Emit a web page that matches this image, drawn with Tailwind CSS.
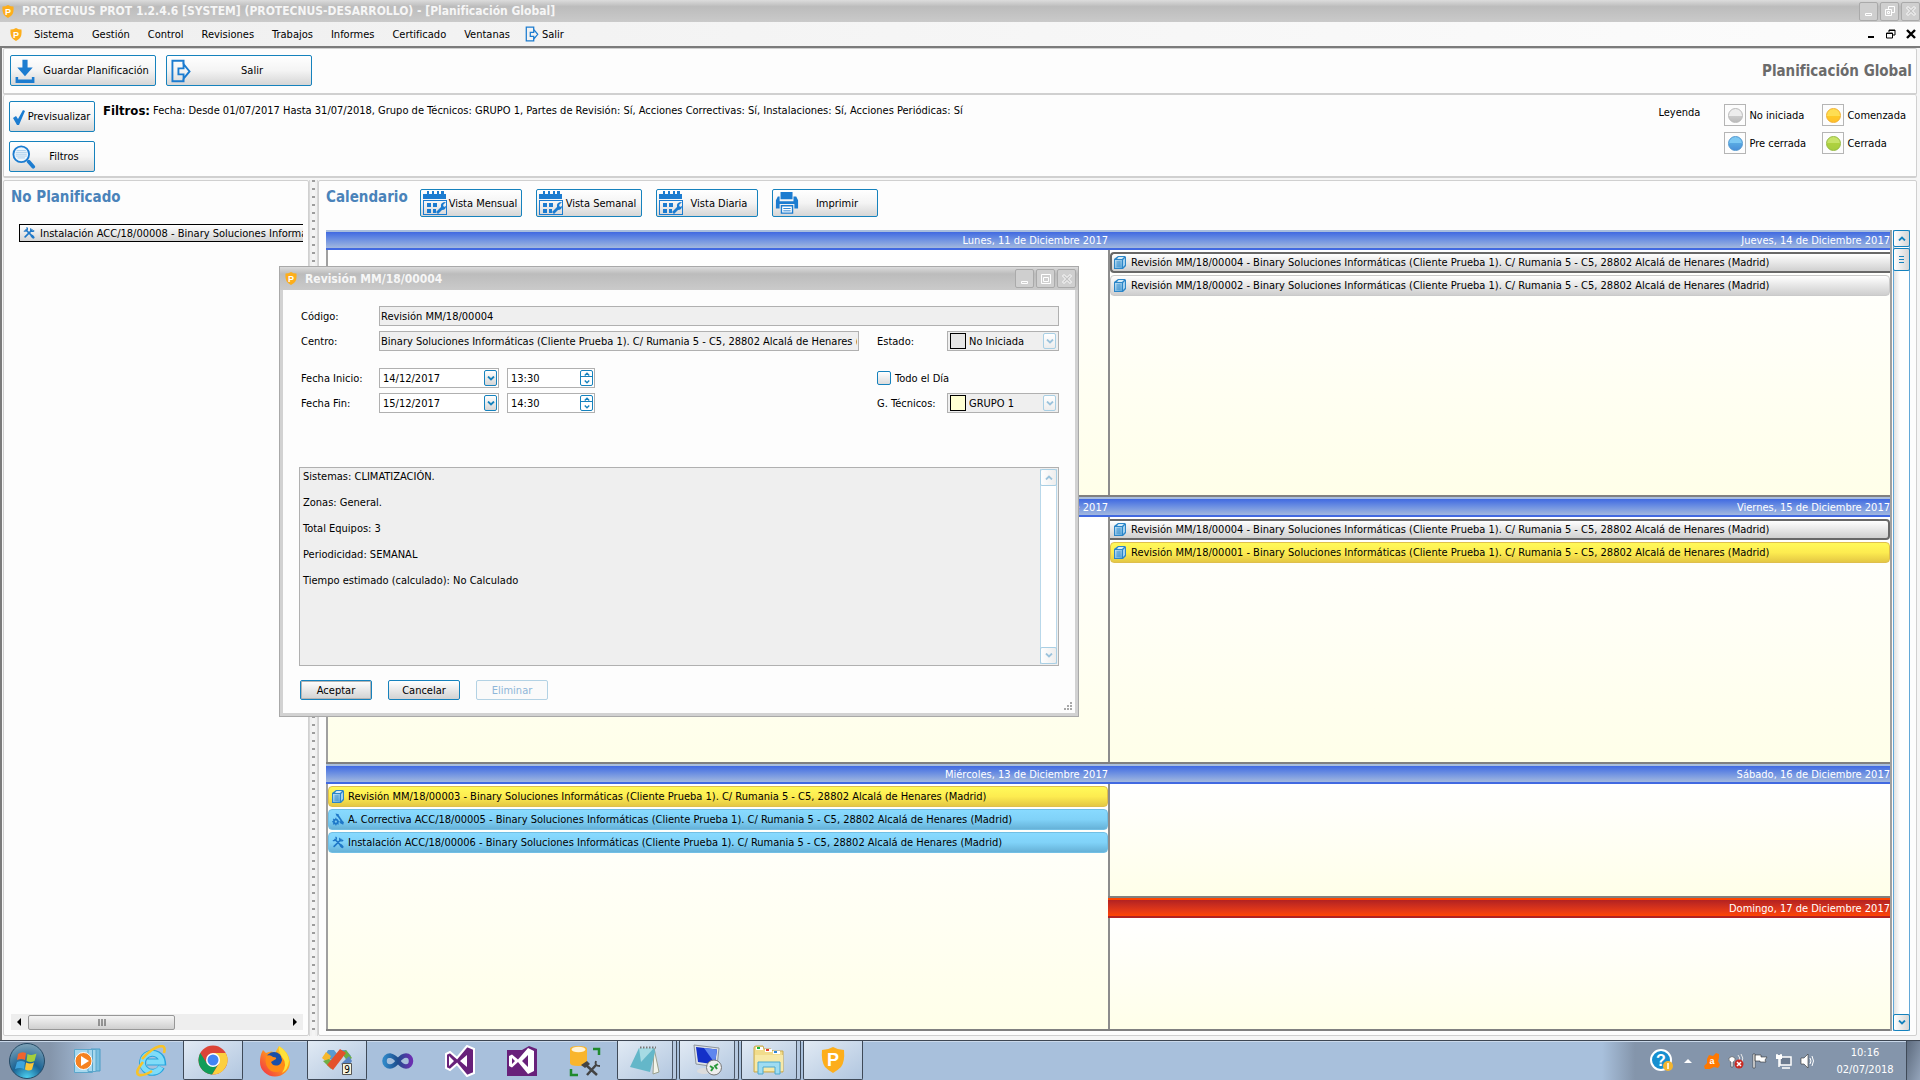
<!DOCTYPE html>
<html lang="es">
<head>
  <meta charset="UTF-8" />
  <meta name="viewport" content="width=device-width, initial-scale=1.0" />
  <title>PROTECNUS PROT - Planificación Global</title>
  <script src="https://cdn.jsdelivr.net/npm/@tailwindcss/browser@4"></script>
</head>
<body class="min-h-screen flex flex-col bg-[#fdfdfd] text-black text-[11px] leading-[13px] font-['DejaVu_Sans_Condensed','DejaVu_Sans',sans-serif]">

  <!-- Icon set -->
  <svg class="absolute size-0" aria-hidden="true">
    <defs>
      <linearGradient id="docGrad" x1="0" y1="0" x2="1" y2="1"><stop offset="0" stop-color="#b9dcf2" /><stop offset="1" stop-color="#5ba6da" /></linearGradient>
      <linearGradient id="blueGrad" x1="0" y1="0" x2="0" y2="1"><stop offset="0" stop-color="#8fe3fb" /><stop offset="1" stop-color="#1f9ad6" /></linearGradient>
    </defs>
    <symbol id="logo" viewBox="0 0 24 26">
      <path fill="#fdae1b" d="M1 3q6 0 11-3q5 3 11 3q1 12-3 17q-3 3-8 6q-5-3-8-6q-4-6-3-17z" />
      <text x="12" y="19" text-anchor="middle" font-family="Liberation Sans" font-weight="700" font-size="18" fill="#fff">P</text>
    </symbol>
    <symbol id="exit" viewBox="0 0 24 28">
      <path fill="none" stroke="#1c7cd0" stroke-width="2.2" d="M15 6V2H2v24h13v-3" />
      <path fill="none" stroke="#1c7cd0" stroke-width="2.2" d="M9 11h6V6l7 8.500-7 8.500v-5H9z" />
    </symbol>
    <symbol id="download" viewBox="0 0 24 28">
      <path fill="#1c7cd0" d="M9 1h6v9h6l-9 10-9-10h6zM1 21h3v3h16v-3h3v7H1z" />
    </symbol>
    <symbol id="check" viewBox="0 0 14 16"><path fill="#1c7cd0" d="M1 9l3-2 2 3 5-9 2 1-6 14H5z" /></symbol>
    <symbol id="lens" viewBox="0 0 26 26">
      <circle cx="10" cy="10" r="8.500" fill="#eef6fc" stroke="#1c7cd0" stroke-width="2" />
      <path stroke="#a9cdec" stroke-width="1" d="M5 6h10M4 8h12M4 10h12M4 12h12M6 14h8" />
      <path stroke="#1c7cd0" stroke-width="4" stroke-linecap="round" d="M18 18l5 5.500" />
    </symbol>
    <symbol id="calendar" viewBox="0 0 24 24">
      <path fill="#1c7cd0" d="M4 0h2v3h3V0h2v3h3V0h2v3h2V0h3v3h2v5H0V3h4z" />
      <path fill="#1c7cd0" d="M0 9h24v15H0zm1 1v13h22V10z" />
      <path fill="#1c7cd0" d="M4 12h4v4H4zM10 12h4v4h-4zM4 18h4v4H4zM10 18h3v4h-3zM13 21l5-5q-1-5 5-5l-3 3 1 2 2-1q0 4-4 4l-4 4z" />
    </symbol>
    <symbol id="printer" viewBox="0 0 26 24">
      <path fill="#1c7cd0" d="M6 0h13v8H6zM3 5h2v5h15V5h3l2 4v9h-4v-5H5v5H1V9z" />
      <path fill="#fff" stroke="#1c7cd0" stroke-width="1.500" d="M7 15h12v8H7z" />
      <path stroke="#1c7cd0" d="M9 18h8M9 20.500h8" />
    </symbol>
    <symbol id="doc" viewBox="0 0 12 13">
      <path fill="#2c86c8" d="M4 0h7l1 1v9l-3 3H0V3z" />
      <path fill="#d5ebf8" d="M4.500 1H10L8 3H3z" />
      <path fill="url(#docGrad)" d="M1 4h7v8H1z" />
      <path stroke="#2c86c8" stroke-width=".8" d="M2.500 6h4M2.500 8h4M2.500 10h4" />
      <path fill="#a5d2ef" d="M9 4l2-2v7l-2 2z" />
    </symbol>
    <symbol id="tools" viewBox="0 0 14 14">
      <path stroke="#1f78c8" stroke-width="2" stroke-linecap="round" d="M3.500 3.500l7.500 7.500M2.500 11.500l8-8" />
      <path fill="none" stroke="#1f78c8" stroke-width="1.600" d="M1 4.500q2 1 3.500-1T4 .8M9 1.500q-.5 3 1 3.500t3-1" />
      <path stroke="#1f78c8" stroke-width="3" stroke-linecap="round" d="M10.500 10.500l1.500 1.500" />
    </symbol>
    <symbol id="repair" viewBox="0 0 14 14">
      <circle cx="4.500" cy="9.500" r="2.300" fill="none" stroke="#1f78c8" stroke-width="2" />
      <path stroke="#1f78c8" stroke-width="1.200" d="M4.500 5v2M4.500 12v2M0 9.500h2M7 9.500h2M1.300 6.300l1.500 1.500M6.300 11.300l1.400 1.400M2.700 11.300l-1.400 1.400" />
      <path stroke="#1f78c8" stroke-width="2" d="M6 1l6 9" />
      <path fill="#1f78c8" d="M4 0l4 1-2 3zM10 8l4 2-1 3-4-2z" />
    </symbol>
    <symbol id="up" viewBox="0 0 8 5"><path fill="none" stroke="currentColor" stroke-width="1.800" d="M1 4.500l3-3 3 3" /></symbol>
    <symbol id="down" viewBox="0 0 8 5"><path fill="none" stroke="currentColor" stroke-width="1.800" d="M1 .5l3 3 3-3" /></symbol>
    <symbol id="win-min" viewBox="0 0 10 10"><path fill="none" stroke="currentColor" d="M1.500 7.500h6v2h-6z" /></symbol>
    <symbol id="win-max" viewBox="0 0 10 10"><path fill="none" stroke="currentColor" d="M.5.5h9v9h-9zM2.500 3.500h5v4h-5z" /></symbol>
    <symbol id="win-restore" viewBox="0 0 10 10"><path fill="none" stroke="currentColor" d="M3.500 3V.5h6v6H7M.5 3.500h6v6h-6zM2.500 5.500h2v2h-2z" /></symbol>
    <symbol id="win-close" viewBox="0 0 10 10"><path fill="#c4c4c4" stroke="currentColor" d="M.5 2L2 .5l3 3 3-3L9.500 2l-3 3 3 3L8 9.500l-3-3-3 3L.5 8l3-3z" /></symbol>
  </svg>

  <!-- Title bar -->
  <header class="h-[22px] shrink-0 flex items-center pl-0.5 bg-linear-to-b from-[#dcdcdc] via-[#bcbcbc] via-30% to-[#cacaca]">
    <svg class="w-3 h-[13px]"><use href="#logo" /></svg>
    <h1 class="flex-1 pl-2 text-xs leading-4 font-bold text-[#f6f6f6]">PROTECNUS PROT 1.2.4.6 [SYSTEM] (PROTECNUS-DESARROLLO) - [Planificación Global]</h1>
    <div class="flex gap-0.5 text-white">
      <button aria-label="Minimizar" class="size-[19px] grid place-items-center border border-[#aaa] rounded-xs bg-[#cfcfcf]"><svg class="size-2.5"><use href="#win-min" /></svg></button>
      <button aria-label="Restaurar" class="size-[19px] grid place-items-center border border-[#aaa] rounded-xs bg-[#cfcfcf]"><svg class="size-2.5"><use href="#win-restore" /></svg></button>
      <button aria-label="Cerrar" class="size-[19px] grid place-items-center border border-[#aaa] rounded-xs bg-[#cfcfcf]"><svg class="size-2.5"><use href="#win-close" /></svg></button>
    </div>
  </header>

  <!-- Menu bar -->
  <nav class="h-6 shrink-0 flex items-center gap-[18px] pl-2.5 pr-1 bg-linear-to-r from-[#efefef] to-[#fcfcfc]">
    <svg class="w-3 h-[13px] -mr-1.5"><use href="#logo" /></svg>
    <button>Sistema</button>
    <button>Gestión</button>
    <button>Control</button>
    <button>Revisiones</button>
    <button>Trabajos</button>
    <button>Informes</button>
    <button>Certificado</button>
    <button>Ventanas</button>
    <button class="flex items-center gap-0.5 -ml-1"><svg class="w-4 h-4"><use href="#exit" /></svg>Salir</button>
    <div class="ml-auto flex items-center gap-2.5">
      <button aria-label="Minimizar ventana"><svg class="size-2.5" viewBox="0 0 10 10"><path fill="#000" d="M2 7h6v2H2z" /></svg></button>
      <button aria-label="Restaurar ventana"><svg class="size-2.5" viewBox="0 0 10 10"><path fill="none" stroke="#000" d="M3 3V1h6v5H7M.5 4h6v5h-6zM3 1.500h6M.5 4.500h6" /></svg></button>
      <button aria-label="Cerrar ventana"><svg class="size-2.5" viewBox="0 0 10 10"><path stroke="#000" stroke-width="2.400" d="M1 1l8 8M9 1L1 9" /></svg></button>
    </div>
  </nav>

  <main class="relative flex-1 flex flex-col border-t-2 border-l-2 border-[#7b7b7b] pl-px pr-[3px] pb-1 bg-[#f6f6f6]">

    <!-- Toolbar -->
    <section class="h-[47px] flex items-start px-1.5 pt-1.5 border border-b-2 border-[#d0d0d0] rounded-xs bg-[#fdfdfd]">
      <button class="w-[146px] h-[31px] flex items-center pl-0.5 border border-[#1682bd] rounded-xs bg-linear-to-b from-white via-[#f4f4f4] to-[#d6d6d6]">
        <svg class="w-6 h-6"><use href="#download" /></svg><span class="flex-1 whitespace-nowrap">Guardar Planificación</span>
      </button>
      <button class="ml-2.5 w-[146px] h-[31px] flex items-center pl-0.5 border border-[#1682bd] rounded-xs bg-linear-to-b from-white via-[#f4f4f4] to-[#d6d6d6]">
        <svg class="w-6 h-6"><use href="#exit" /></svg><span class="flex-1">Salir</span>
      </button>
      <h2 class="ml-auto -mr-0.5 pt-1.5 text-[15px] leading-5 font-bold text-[#6b6b6b]">Planificación Global</h2>
    </section>

    <!-- Filters -->
    <section class="h-[83px] flex items-start pl-[5px] pr-2.5 pt-1.5 border border-t-0 border-b-2 border-[#d0d0d0] rounded-xs bg-[#fdfdfd]">
      <div class="flex flex-col gap-[9px]">
        <button class="w-[86px] h-[31px] flex items-center px-0.5 border border-[#1682bd] rounded-xs bg-linear-to-b from-white via-[#f4f4f4] to-[#d6d6d6]">
          <svg class="w-3.5 h-4"><use href="#check" /></svg><span class="flex-1">Previsualizar</span>
        </button>
        <button class="w-[86px] h-[31px] flex items-center px-0.5 border border-[#1682bd] rounded-xs bg-linear-to-b from-white via-[#f4f4f4] to-[#d6d6d6]">
          <svg class="size-6"><use href="#lens" /></svg><span class="flex-1">Filtros</span>
        </button>
      </div>
      <h3 class="ml-2 pt-0.5 text-[13px] leading-4 font-bold">Filtros:</h3>
      <p class="ml-[3px] pt-0.5 leading-4">Fecha: Desde 01/07/2017 Hasta 31/07/2018, Grupo de Técnicos: GRUPO 1, Partes de Revisión: Sí, Acciones Correctivas: Sí, Instalaciones: Sí, Acciones Periódicas: Sí</p>
      <div class="ml-auto flex">
        <span class="pt-[5px] w-[66px]">Leyenda</span>
        <ul class="grid grid-cols-[98px_auto] gap-y-1.5 pt-[3px]">
          <li class="flex items-center gap-[3px]"><span class="size-[22px] grid place-items-center border border-[#b5b5b5]"><span class="size-[15px] rounded-full border border-[#b9b9b9] bg-linear-to-b from-[#ededed] from-50% via-[#cdcdcd] via-50% to-[#bcbcbc]"></span></span>No iniciada</li>
          <li class="flex items-center gap-[3px]"><span class="size-[22px] grid place-items-center border border-[#b5b5b5]"><span class="size-[15px] rounded-full border border-[#f3b02c] bg-linear-to-b from-[#fede52] from-50% via-[#fecb25] via-50% to-[#ffc02b]"></span></span>Comenzada</li>
          <li class="flex items-center gap-[3px]"><span class="size-[22px] grid place-items-center border border-[#b5b5b5]"><span class="size-[15px] rounded-full border border-[#4d95cf] bg-linear-to-b from-[#7cc8f3] from-50% via-[#58a8e2] via-50% to-[#4a90d9]"></span></span>Pre cerrada</li>
          <li class="flex items-center gap-[3px]"><span class="size-[22px] grid place-items-center border border-[#b5b5b5]"><span class="size-[15px] rounded-full border border-[#93b93c] bg-linear-to-b from-[#c7e368] from-50% via-[#aed13f] via-50% to-[#a6cd3f]"></span></span>Cerrada</li>
        </ul>
      </div>
    </section>

    <div class="flex-1 flex mt-0.5">

      <!-- Unplanned work -->
      <aside class="w-[306px] flex flex-col border border-[#d0d0d0] rounded-xs bg-[#fdfdfd] pl-[7px] pt-1.5 pb-[5px] pr-[5px]">
        <h2 class="text-[15px] leading-5 font-bold text-[#4a83ba]">No Planificado</h2>
        <ul class="flex-1 mt-[17px] ml-2 overflow-hidden">
          <li class="h-[18px] flex items-center gap-[5px] pl-[3px] border border-r-0 border-black bg-linear-to-b from-white to-[#d4d4d4] whitespace-nowrap overflow-hidden"><svg class="size-3 shrink-0"><use href="#tools" /></svg>Instalación ACC/18/00008 - Binary Soluciones Informáticas</li>
        </ul>
        <div class="h-4 flex items-center bg-[#eeeeee]">
          <svg class="w-[17px] h-2" viewBox="0 0 17 8"><path d="M10 0v8L6 4z" /></svg>
          <div class="w-[147px] h-[15px] grid place-items-center border border-[#979797] rounded-xs bg-linear-to-b from-[#f4f4f4] via-[#e2e2e2] via-50% to-[#cfcfcf]"><svg class="w-2 h-[7px]" viewBox="0 0 8 7"><path stroke="#444" d="M1 0v7M4 0v7M7 0v7" /></svg></div>
          <svg class="ml-auto w-[17px] h-2" viewBox="0 0 17 8"><path d="M7 0v8l4-4z" /></svg>
        </div>
      </aside>

      <!-- Splitter -->
      <div class="w-[9px] flex justify-center border-x border-[#d8d8d8] bg-[#f0f0f0]">
        <div class="w-[3px] bg-[repeating-linear-gradient(to_bottom,#9d9d9d_0,#9d9d9d_2px,#f4f4f4_2px,#f4f4f4_8px)]"></div>
      </div>

      <!-- Calendar -->
      <section class="flex-1 flex flex-col border border-[#d0d0d0] rounded-xs bg-[#fdfdfd] pl-[7px] pr-1.5 pt-2 pb-1">
        <div class="flex items-start gap-3.5">
          <h2 class="w-20 -mt-0.5 text-[15px] leading-5 font-bold text-[#4a83ba]">Calendario</h2>
          <button class="w-[102px] h-7 flex items-center px-0.5 border border-[#1682bd] rounded-xs bg-linear-to-b from-white via-[#f4f4f4] to-[#d6d6d6] whitespace-nowrap"><svg class="size-6"><use href="#calendar" /></svg><span class="flex-1">Vista Mensual</span></button>
          <button class="w-[106px] h-7 flex items-center px-0.5 border border-[#1682bd] rounded-xs bg-linear-to-b from-white via-[#f4f4f4] to-[#d6d6d6] whitespace-nowrap"><svg class="size-6"><use href="#calendar" /></svg><span class="flex-1">Vista Semanal</span></button>
          <button class="w-[102px] h-7 flex items-center px-0.5 border border-[#1682bd] rounded-xs bg-linear-to-b from-white via-[#f4f4f4] to-[#d6d6d6] whitespace-nowrap"><svg class="size-6"><use href="#calendar" /></svg><span class="flex-1">Vista Diaria</span></button>
          <button class="w-[106px] h-7 flex items-center px-0.5 border border-[#1682bd] rounded-xs bg-linear-to-b from-white via-[#f4f4f4] to-[#d6d6d6] whitespace-nowrap"><svg class="size-6"><use href="#printer" /></svg><span class="flex-1">Imprimir</span></button>
        </div>

        <div class="flex-1 flex gap-px mt-[13px]">
          <div class="flex-1 grid grid-cols-2 border-r-2 border-[#a0a0a0]">
            <!-- Monday to Wednesday -->
            <div class="grid grid-rows-3">
              <article class="flex flex-col border-b-2 border-[#808080]">
                <h3 class="h-5 text-right leading-[17px] text-white border-t-2 border-t-[#a9bedd] border-b-2 border-b-[#4169e1] bg-linear-to-b from-[#4169e1] to-[#a3b8de]">Lunes, 11 de Diciembre 2017</h3>
                <div class="flex-1 border-l-2 border-[#a0a0a0] bg-linear-to-b from-white to-[#ffffe9]"></div>
              </article>
              <article class="flex flex-col border-b-2 border-[#808080]">
                <h3 class="h-5 text-right leading-[17px] text-white border-t-2 border-t-[#a9bedd] border-b-2 border-b-[#4169e1] bg-linear-to-b from-[#4169e1] to-[#a3b8de]">Martes, 12 de Diciembre 2017</h3>
                <div class="flex-1 border-l-2 border-[#a0a0a0] bg-linear-to-b from-white to-[#ffffe9]"></div>
              </article>
              <article class="flex flex-col border-b-2 border-[#808080]">
                <h3 class="h-5 text-right leading-[17px] text-white border-t-2 border-t-[#a9bedd] border-b-2 border-b-[#4169e1] bg-linear-to-b from-[#4169e1] to-[#a3b8de]">Miércoles, 13 de Diciembre 2017</h3>
                <ul class="flex-1 space-y-0.5 pt-0.5 border-l-2 border-[#a0a0a0] bg-linear-to-b from-white to-[#ffffe9]">
                  <li class="h-[21px] flex items-center gap-1 pl-[3px] border border-[#dfbf4c] rounded bg-linear-to-b from-[#fff95a] via-[#fdec50] to-[#e4c844]"><svg class="w-3 h-[13px]"><use href="#doc" /></svg>Revisión MM/18/00003 - Binary Soluciones Informáticas (Cliente Prueba 1). C/ Rumania 5 - C5, 28802 Alcalá de Henares (Madrid)</li>
                  <li class="h-[21px] flex items-center gap-1 pl-[3px] border border-[#72bfe4] rounded bg-linear-to-b from-[#88daff] via-[#80d2f8] to-[#66b2d8]"><svg class="w-3 h-[13px]"><use href="#repair" /></svg>A. Correctiva ACC/18/00005 - Binary Soluciones Informáticas (Cliente Prueba 1). C/ Rumania 5 - C5, 28802 Alcalá de Henares (Madrid)</li>
                  <li class="h-[21px] flex items-center gap-1 pl-[3px] border border-[#72bfe4] rounded bg-linear-to-b from-[#88daff] via-[#80d2f8] to-[#66b2d8]"><svg class="w-3 h-[13px]"><use href="#tools" /></svg>Instalación ACC/18/00006 - Binary Soluciones Informáticas (Cliente Prueba 1). C/ Rumania 5 - C5, 28802 Alcalá de Henares (Madrid)</li>
                </ul>
              </article>
            </div>
            <!-- Thursday to Sunday -->
            <div class="grid grid-rows-[2fr_2fr_1fr_1fr]">
              <article class="flex flex-col border-b-2 border-[#808080]">
                <h3 class="h-5 text-right leading-[17px] text-white border-t-2 border-t-[#a9bedd] border-b-2 border-b-[#4169e1] bg-linear-to-b from-[#4169e1] to-[#a3b8de]">Jueves, 14 de Diciembre 2017</h3>
                <ul class="flex-1 space-y-0.5 pt-0.5 border-l-2 border-[#8c8c8c] bg-linear-to-b from-white to-[#ffffe9]">
                  <li class="h-[21px] flex items-center gap-[5px] pl-0.5 border-2 border-r-0 border-[#686868] rounded-l bg-linear-to-b from-white to-[#d0d0d0]"><svg class="w-3 h-[13px]"><use href="#doc" /></svg>Revisión MM/18/00004 - Binary Soluciones Informáticas (Cliente Prueba 1). C/ Rumania 5 - C5, 28802 Alcalá de Henares (Madrid)</li>
                  <li class="h-[21px] flex items-center gap-[5px] pl-[3px] border border-[#cacaca] rounded bg-linear-to-b from-white to-[#cecece]"><svg class="w-3 h-[13px]"><use href="#doc" /></svg>Revisión MM/18/00002 - Binary Soluciones Informáticas (Cliente Prueba 1). C/ Rumania 5 - C5, 28802 Alcalá de Henares (Madrid)</li>
                </ul>
              </article>
              <article class="flex flex-col border-b-2 border-[#808080]">
                <h3 class="h-5 text-right leading-[17px] text-white border-t-2 border-t-[#a9bedd] border-b-2 border-b-[#4169e1] bg-linear-to-b from-[#4169e1] to-[#a3b8de]">Viernes, 15 de Diciembre 2017</h3>
                <ul class="flex-1 space-y-0.5 pt-0.5 border-l-2 border-[#8c8c8c] bg-linear-to-b from-white to-[#ffffe9]">
                  <li class="h-[21px] flex items-center gap-[5px] pl-1 border-2 border-l-0 border-[#686868] rounded-r bg-linear-to-b from-white to-[#d0d0d0]"><svg class="w-3 h-[13px]"><use href="#doc" /></svg>Revisión MM/18/00004 - Binary Soluciones Informáticas (Cliente Prueba 1). C/ Rumania 5 - C5, 28802 Alcalá de Henares (Madrid)</li>
                  <li class="h-[21px] flex items-center gap-[5px] pl-[3px] border border-[#dfbf4c] rounded bg-linear-to-b from-[#fff95a] via-[#fdec50] to-[#e4c844]"><svg class="w-3 h-[13px]"><use href="#doc" /></svg>Revisión MM/18/00001 - Binary Soluciones Informáticas (Cliente Prueba 1). C/ Rumania 5 - C5, 28802 Alcalá de Henares (Madrid)</li>
                </ul>
              </article>
              <article class="flex flex-col border-b-2 border-[#808080]">
                <h3 class="h-5 text-right leading-[17px] text-white border-t-2 border-t-[#a9bedd] border-b-2 border-b-[#4169e1] bg-linear-to-b from-[#4169e1] to-[#a3b8de]">Sábado, 16 de Diciembre 2017</h3>
                <div class="flex-1 border-l-2 border-[#8c8c8c] bg-linear-to-b from-white to-[#ffffe9]"></div>
              </article>
              <article class="flex flex-col border-b-2 border-[#808080]">
                <h3 class="h-5 text-right leading-[17px] text-white border-t-2 border-t-[#ff4500] border-b-2 border-b-[#b22222] bg-linear-to-b from-[#b22222] to-[#ff4500]">Domingo, 17 de Diciembre 2017</h3>
                <div class="flex-1 border-l-2 border-[#8c8c8c] bg-linear-to-b from-white to-[#ffffe9]"></div>
              </article>
            </div>
          </div>

          <!-- Vertical scrollbar -->
          <div class="w-[17px] flex flex-col gap-px border-x border-[#63a8d8] bg-linear-to-r from-[#e2e2e2] to-white to-40% text-[#1682bd]">
            <button aria-label="Subir" class="h-[17px] -mx-px grid place-items-center border border-[#1682bd] rounded-xs bg-linear-to-r from-white to-[#d6d6d6]"><svg class="w-2 h-[5px]"><use href="#up" /></svg></button>
            <div class="h-[23px] -mx-px grid place-items-center border border-[#1682bd] rounded-xs bg-linear-to-r from-white to-[#d6d6d6]"><svg class="w-[5px] h-[7px]" viewBox="0 0 5 7"><path stroke="currentColor" d="M0 .5h5M0 3.500h5M0 6.500h5" /></svg></div>
            <button aria-label="Bajar" class="mt-auto h-[17px] -mx-px grid place-items-center border border-[#1682bd] rounded-xs bg-linear-to-r from-white to-[#d6d6d6]"><svg class="w-2 h-[5px]"><use href="#down" /></svg></button>
          </div>
        </div>
      </section>
    </div>

    <!-- Inspection dialog -->
    <div role="dialog" aria-labelledby="dialogTitle" class="absolute left-[277px] top-[218px] w-[800px] border border-[#a9a9a9] bg-[#d2d2d2]">
      <div class="h-[23px] flex items-center pl-[5px] pr-0.5 bg-linear-to-b from-[#dcdcdc] via-[#bcbcbc] via-30% to-[#cacaca]">
        <svg class="w-3 h-[13px]"><use href="#logo" /></svg>
        <h2 id="dialogTitle" class="flex-1 pl-2 text-xs leading-4 font-bold text-[#f6f6f6]">Revisión MM/18/00004</h2>
        <div class="flex gap-0.5 text-white">
          <button aria-label="Minimizar diálogo" class="size-[19px] grid place-items-center border border-[#aaa] rounded-xs bg-[#cfcfcf]"><svg class="size-2.5"><use href="#win-min" /></svg></button>
          <button aria-label="Maximizar diálogo" class="size-[19px] grid place-items-center border border-[#aaa] rounded-xs bg-[#cfcfcf]"><svg class="size-2.5"><use href="#win-max" /></svg></button>
          <button aria-label="Cerrar diálogo" class="size-[19px] grid place-items-center border border-[#aaa] rounded-xs bg-[#cfcfcf]"><svg class="size-2.5"><use href="#win-close" /></svg></button>
        </div>
      </div>
      <form class="mx-[3px] mb-[3px] pt-4 pb-0.5 pl-4 pr-0.5 bg-[#fdfdfd]">
        <div class="mr-3.5 grid grid-cols-[78px_480px_18px_70px_112px] items-center gap-y-[5px] pl-0.5">
          <label for="codigo">Código:</label>
          <input id="codigo" readonly value="Revisión MM/18/00004" class="col-span-4 h-5 px-px border border-[#b0b0b0] bg-[#efefef]" />

          <label for="centro">Centro:</label>
          <input id="centro" readonly value="Binary Soluciones Informáticas (Cliente Prueba 1). C/ Rumania 5 - C5, 28802 Alcalá de Henares (Madrid)" class="h-5 px-px border border-[#b0b0b0] bg-[#efefef]" />
          <label for="estado" class="col-start-4">Estado:</label>
          <div class="h-5 flex items-center gap-[3px] px-0.5 border border-[#b0b0b0] bg-[#efefef]">
            <span class="size-4 border border-black bg-[#e6e6e6]"></span>
            <select id="estado" disabled class="flex-1 appearance-none opacity-100 text-black"><option>No Iniciada</option></select>
            <span class="w-[13px] h-4 grid place-items-center border border-[#a9cfe4] rounded-xs bg-linear-to-b from-white to-[#ededed] text-[#9cc3dc]"><svg class="w-2 h-[5px]"><use href="#down" /></svg></span>
          </div>

          <label for="fechaInicio" class="mt-3">Fecha Inicio:</label>
          <div class="mt-3 flex gap-2">
            <div class="w-[120px] h-5 flex items-center pl-[3px] pr-px border border-[#b0b0b0] bg-white"><input id="fechaInicio" value="14/12/2017" class="flex-1 min-w-0" /><button type="button" aria-label="Abrir fecha de inicio" class="w-[13px] h-4 grid place-items-center border border-[#1682bd] rounded-xs bg-linear-to-b from-white to-[#d6d6d6] text-[#1682bd]"><svg class="w-2 h-[5px]"><use href="#down" /></svg></button></div>
            <div class="w-[88px] h-5 flex items-center pl-[3px] pr-px border border-[#b0b0b0] bg-white"><input aria-label="Hora de inicio" value="13:30" class="flex-1 min-w-0" /><span class="w-[13px] h-4 grid grid-rows-2 place-items-center border border-[#1682bd] rounded-xs divide-y divide-[#1682bd] text-[#1682bd]"><button type="button" aria-label="Más hora de inicio" class="w-full grid place-items-center"><svg class="w-1.5 h-1"><use href="#up" /></svg></button><button type="button" aria-label="Menos hora de inicio" class="w-full grid place-items-center"><svg class="w-1.5 h-1"><use href="#down" /></svg></button></span></div>
          </div>
          <label class="col-start-4 col-span-2 mt-3 flex items-center gap-1"><input type="checkbox" class="size-3.5 appearance-none border border-[#1682bd] rounded-xs bg-linear-to-b from-white to-[#dcdcdc]" />Todo el Día</label>

          <label for="fechaFin">Fecha Fin:</label>
          <div class="flex gap-2">
            <div class="w-[120px] h-5 flex items-center pl-[3px] pr-px border border-[#b0b0b0] bg-white"><input id="fechaFin" value="15/12/2017" class="flex-1 min-w-0" /><button type="button" aria-label="Abrir fecha de fin" class="w-[13px] h-4 grid place-items-center border border-[#1682bd] rounded-xs bg-linear-to-b from-white to-[#d6d6d6] text-[#1682bd]"><svg class="w-2 h-[5px]"><use href="#down" /></svg></button></div>
            <div class="w-[88px] h-5 flex items-center pl-[3px] pr-px border border-[#b0b0b0] bg-white"><input aria-label="Hora de fin" value="14:30" class="flex-1 min-w-0" /><span class="w-[13px] h-4 grid grid-rows-2 place-items-center border border-[#1682bd] rounded-xs divide-y divide-[#1682bd] text-[#1682bd]"><button type="button" aria-label="Más hora de fin" class="w-full grid place-items-center"><svg class="w-1.5 h-1"><use href="#up" /></svg></button><button type="button" aria-label="Menos hora de fin" class="w-full grid place-items-center"><svg class="w-1.5 h-1"><use href="#down" /></svg></button></span></div>
          </div>
          <label for="tecnicos" class="col-start-4">G. Técnicos:</label>
          <div class="h-5 flex items-center gap-[3px] px-0.5 border border-[#b0b0b0] bg-[#efefef]">
            <span class="size-4 border border-black bg-[#ffffd2]"></span>
            <select id="tecnicos" disabled class="flex-1 appearance-none opacity-100 text-black"><option>GRUPO 1</option></select>
            <span class="w-[13px] h-4 grid place-items-center border border-[#a9cfe4] rounded-xs bg-linear-to-b from-white to-[#ededed] text-[#9cc3dc]"><svg class="w-2 h-[5px]"><use href="#down" /></svg></span>
          </div>
        </div>

        <div class="mt-[54px] mr-3.5 h-[199px] flex p-px border border-[#b0b0b0] bg-[#efefef]">
          <textarea aria-label="Detalle de la revisión" readonly class="flex-1 resize-none overflow-hidden px-0.5 pt-px">Sistemas: CLIMATIZACIÓN.

Zonas: General.

Total Equipos: 3

Periodicidad: SEMANAL

Tiempo estimado (calculado): No Calculado</textarea>
          <div class="w-[17px] flex flex-col justify-between border-x border-[#b9d8ea] bg-white text-[#9cc3dc]">
            <span class="h-[17px] -mx-px grid place-items-center border border-[#a9cfe4] rounded-xs bg-linear-to-r from-white to-[#ededed]"><svg class="w-2 h-[5px]"><use href="#up" /></svg></span>
            <span class="h-[17px] -mx-px grid place-items-center border border-[#a9cfe4] rounded-xs bg-linear-to-r from-white to-[#ededed]"><svg class="w-2 h-[5px]"><use href="#down" /></svg></span>
          </div>
        </div>

        <div class="flex gap-4 pl-px pt-3.5">
          <button type="submit" class="w-[72px] h-5 border border-[#1682bd] rounded-xs bg-linear-to-b from-white to-[#d2d2d2] shadow-[inset_0_0_0_1px_#b4b4b4]">Aceptar</button>
          <button type="button" class="w-[72px] h-5 border border-[#1682bd] rounded-xs bg-linear-to-b from-white to-[#d2d2d2]">Cancelar</button>
          <button type="button" disabled class="w-[72px] h-5 border border-[#b3d2e4] rounded-xs bg-[#fafafa] text-[#8fb6d8]">Eliminar</button>
        </div>
        <svg class="ml-auto mt-0.5 size-[9px]" viewBox="0 0 9 9"><path fill="#a8a8a8" d="M6 0h2v2H6zM3 3h2v2H3zM6 3h2v2H6zM0 6h2v2H0zM3 6h2v2H3zM6 6h2v2H6z" /></svg>
      </form>
    </div>
  </main>

  <!-- Taskbar -->
  <footer class="h-10 shrink-0 flex items-stretch border-t border-[#3d4653] bg-[linear-gradient(to_right,#8495ab_0,#8495ab_50px,#a8c0dc_95px,#a8c0dc_calc(100%_-_318px),#8495ab_calc(100%_-_285px))] shadow-[inset_0_1px_0_#c9d8ea] text-white">
    <button aria-label="Inicio" class="w-[54px] grid place-items-center">
      <svg class="size-9" viewBox="0 0 36 36">
        <defs><radialGradient id="orb" cx=".5" cy="1" r="1"><stop offset="0" stop-color="#4fd6f5" /><stop offset=".45" stop-color="#1a6394" /><stop offset="1" stop-color="#7fa3b8" /></radialGradient></defs>
        <circle cx="18" cy="18" r="17.500" fill="url(#orb)" stroke="#254a66" />
        <path fill="#f0642d" d="M9 11q4-3 8-1l-1 7q-4-2-8 0z" /><path fill="#a4cf3c" d="M18.500 11q4 2 9-.5l-2 7.500q-4 2-8 0z" />
        <path fill="#3fa4dd" d="M8 19q4-2 8 0l-1 7q-4-2-9 0z" /><path fill="#fdc637" d="M17 19.500q4 2 8 0l-2 7q-3 2-7 0z" />
      </svg>
    </button>
    <button aria-label="Reproductor" class="ml-1 w-[60px] grid place-items-center">
      <svg class="w-8 h-7" viewBox="0 0 32 28"><path fill="#79bfe0" stroke="#4a9bc4" d="M19 2h9v22h-9z" /><path fill="#a7d8ee" stroke="#5ba6cb" d="M16 2.500h8v22h-8zM2.500 2.500h18v23h-18z" /><circle cx="11.500" cy="14" r="8.500" fill="#f58220" stroke="#fff" /><path fill="#fff" d="M9 9l8 5-8 5z" /></svg>
    </button>
    <button aria-label="Internet Explorer" class="ml-0.5 w-[62px] grid place-items-center">
      <svg class="w-8 h-8" viewBox="0 0 32 32"><path fill="none" stroke="#27a5de" stroke-width="7" d="M26.500 22a10 9.500 0 1 1 1-5H12" /><path fill="none" stroke="#7fdcf8" stroke-width="5" d="M26 22a9.800 9.500 0 1 1 1-5H12" /><path fill="none" stroke="#f7c32a" stroke-width="2.600" d="M8 17Q-1 28 4 30q5 1 13-4M7 14Q18 2 26 1q5 0 3 7" /></svg>
    </button>
    <button aria-label="Chrome" class="ml-px w-[60px] grid place-items-center border-x border-b border-[#3f4a58] rounded-b-xs bg-linear-to-br from-[#e1eaf4] to-[#b1c6df]">
      <svg class="size-[30px]" viewBox="0 0 30 30"><circle cx="15" cy="15" r="14.500" fill="#dc4437" /><path fill="#fccf3f" d="M15 8h12.700A14.500 14.500 0 0 1 14 29.500L21 18.500z" /><path fill="#109d58" d="M2.300 8A14.500 14.500 0 0 0 14 29.500L20.500 18.500 9 18.500z" /><circle cx="15" cy="15" r="7" fill="#fff" /><circle cx="15" cy="15" r="5.500" fill="#4285f4" /></svg>
    </button>
    <button aria-label="Firefox" class="ml-px w-[62px] grid place-items-center">
      <svg class="size-8" viewBox="0 0 32 32">
        <defs><linearGradient id="fox" x1="1" y1="0" x2="0" y2="1"><stop offset="0" stop-color="#ffe226" /><stop offset=".45" stop-color="#ff9a1b" /><stop offset="1" stop-color="#f0244f" /></linearGradient></defs>
        <path fill="url(#fox)" d="M20 1q10 6 11 16a15 14.500 0 0 1-30 0q0-7 3-12l3 3q6-3 9 0z" /><circle cx="15" cy="15" r="8" fill="#1c4fa8" /><path fill="#ff8a16" d="M7 11q4-2 7 1 4 0 3 2l-5 3q2 5 8 3 5-3 2-9 7 5 3 12-5 6-13 3-7-5-5-15z" /><path fill="#ffe23a" d="M20 1q9 6 10 15-1 9-7 12 6-9 0-16-4-6-3-11z" />
      </svg>
    </button>
    <button aria-label="Aplicación, 9 ventanas" class="ml-px w-[60px] grid place-items-center border-x border-b border-[#3f4a58] rounded-b-xs bg-linear-to-br from-[#e1eaf4] to-[#b1c6df]">
      <svg class="w-8 h-8" viewBox="0 0 32 32"><path fill="#5a9bd0" d="M7 6h6l4 5-6 5-8-3zM19 6h6l5 6-4 5z" /><path fill="#f5b82e" d="M1 14l4-6 5 4-3 7z" /><path fill="#6fae45" d="M2 17l6-2 8 5-6 5zM20 9l5-3 6 8-4 3z" /><path fill="#5a86c4" d="M20 20l8-8 3 5-5 7z" /><path fill="#e4512b" d="M6 21L19 5l6 4L12 26z" /><path fill="#f7f4dc" stroke="#555" d="M21.500 19.500h9v11h-9z" /><text x="26" y="29" text-anchor="middle" font-family="DejaVu Sans Condensed" font-size="10" fill="#000">9</text></svg>
    </button>
    <button aria-label="Blend" class="w-[62px] grid place-items-center">
      <svg class="w-8 h-8" viewBox="0 0 32 32"><defs><linearGradient id="inf"><stop offset="0" stop-color="#2f86c6" /><stop offset=".5" stop-color="#1e4d8d" /><stop offset="1" stop-color="#6a2fb0" /></linearGradient></defs><path fill="none" stroke="url(#inf)" stroke-width="4.500" d="M16 16q-4-5-8-5.500a5 5 0 0 0 0 11q4 0 8-5.500t8-5.500a5 5.500 0 0 1 0 11q-4 0-8-5.500z" /></svg>
    </button>
    <button aria-label="Visual Studio" class="w-[62px] grid place-items-center">
      <svg class="w-8 h-8" viewBox="0 0 32 32"><path fill="#68217a" stroke="#fff" stroke-width="2" d="M2 9l4-2 7 6L23 1l7 3v24l-7 3-10-12-7 6-4-2z" /><path fill="#fff" d="M5 11l5 5-5 5zM23 10v12l-7-6z" /></svg>
    </button>
    <button aria-label="Visual Studio 2" class="w-[62px] grid place-items-center">
      <svg class="w-8 h-8" viewBox="0 0 32 32"><path fill="#68217a" d="M1 5h15l7-4 8 3v27H1z" /><path fill="#fff" d="M3 11l3-1.500 6 5L22 3l6 3v20l-6 3-10-12-6 5.500L3 21zm3 2v6l3-3zM22 10l-6 6 6 6z" /></svg>
    </button>
    <button aria-label="Base de datos" class="w-16 grid place-items-center">
      <svg class="w-8 h-8" viewBox="0 0 32 32"><path fill="#f9b52c" d="M1 4q0-3 8.500-3T18 4v14q0 3-8.500 3T1 18z" /><ellipse cx="9.500" cy="4.500" rx="7" ry="2.800" fill="#fff3d6" /><path fill="none" stroke="#1f8a2d" stroke-width="2.500" d="M24 4h6v6M2 24v6h7" /><path stroke="#444" stroke-width="2.500" d="M17 20l11 10M18 30l9-10" /><path fill="#444" d="M12 20l6-4 3 3-5 4z" /><path fill="none" stroke="#444" stroke-width="2" d="M27 16q-2 5 4 5" /></svg>
    </button>
    <button aria-label="Bloc de notas" class="w-[60px] pr-1 grid place-items-center border-x border-b border-[#3f4a58] rounded-b-xs bg-linear-to-br from-[#e1eaf4] to-[#b1c6df] shadow-[inset_-3px_0_0_#b6c9e0,inset_-4px_0_0_#4c5868]">
      <svg class="w-8 h-8" viewBox="0 0 32 32"><path fill="#f2f4ea" stroke="#9aa08e" d="M25 4l5 24-6 2z" /><path fill="#64b7c9" d="M10 4h15l1 4-5 20-20-5z" /><path fill="#a6dbe4" d="M10 4h15L12 18z" /><path stroke="#777" stroke-width="2" stroke-dasharray="1.500 1.500" d="M11 3.500h16" /></svg>
    </button>
    <button aria-label="Escritorio remoto" class="ml-0.5 w-[60px] pr-1 grid place-items-center border-x border-b border-[#3f4a58] rounded-b-xs bg-linear-to-br from-[#e1eaf4] to-[#b1c6df] shadow-[inset_-3px_0_0_#b6c9e0,inset_-4px_0_0_#4c5868]">
      <svg class="w-8 h-8" viewBox="0 0 32 32"><path fill="#dfe3e6" stroke="#8d959c" d="M3 1l25 3-2 19-21-3z" /><path fill="#1330c8" d="M5 3l21 2.500-2 15L7 18z" /><path fill="#5f86ee" d="M13 4l13 1.500-2 14z" /><ellipse cx="13" cy="27" rx="7" ry="3" fill="#dcdcdc" /><circle cx="23" cy="23.500" r="7.500" fill="#eee" stroke="#777" /><path fill="none" stroke="#2d9a3c" stroke-width="2" d="M19 22l3 2-2 3M27 20l-3 2 2 3" /></svg>
    </button>
    <button aria-label="Explorador" class="ml-0.5 w-[60px] pr-1 grid place-items-center border-x border-b border-[#3f4a58] rounded-b-xs bg-linear-to-br from-[#e1eaf4] to-[#b1c6df] shadow-[inset_-3px_0_0_#b6c9e0,inset_-4px_0_0_#4c5868]">
      <svg class="w-8 h-8" viewBox="0 0 32 32"><path fill="#f1dc8c" stroke="#c8a951" d="M1 4q0-2 2-2h7l1 3h7l2 2h10v21H1z" /><path fill="#fff" d="M3 3h7v3H3zM12 5h7v3h-7zM20 7h7v3h-7z" /><path fill="#19b33c" d="M4 3h3v2H4z" /><path fill="#e03b2b" d="M13 5h3v2h-3z" /><path fill="#2c86d8" d="M21 7h3v2h-3z" /><path fill="#f7e9a8" d="M2 11h28v16H2z" /><path fill="#9fdcf2" stroke="#4ca8cf" d="M5 30V18h22v12h-5v-7H10v7z" /></svg>
    </button>
    <button aria-label="Protecnus" class="ml-0.5 w-[60px] grid place-items-center border-x border-b border-[#3f4a58] rounded-b-xs bg-linear-to-br from-[#e1eaf4] to-[#b1c6df]">
      <svg class="w-6 h-[26px]"><use href="#logo" /></svg>
    </button>

    <!-- Tray -->
    <div class="ml-auto flex items-center">
      <svg class="w-6 h-6" viewBox="0 0 24 24"><circle cx="11" cy="11" r="10" fill="#168fd0" stroke="#fff" stroke-width="2" /><text x="11" y="17" text-anchor="middle" font-family="Liberation Sans" font-weight="700" font-size="16" fill="#fff">?</text><circle cx="18" cy="17" r="5" fill="#f3b52f" /><path stroke="#fff" stroke-width="1.500" d="M18 14v6" /></svg>
      <svg class="ml-2.5 w-2 h-1" viewBox="0 0 8 4"><path fill="#fff" d="M0 4l4-4 4 4z" /></svg>
      <svg class="ml-3 size-4" viewBox="0 0 16 16"><path fill="#ff7800" d="M5 2l4 1 3-3 3 1v4l-1 3 2 4-2 3-4-1-4 2H1l-1-3 3-3V6z" /><text x="8" y="11" text-anchor="middle" font-family="Liberation Sans" font-weight="700" font-size="9" fill="#fff">a</text></svg>
      <svg class="ml-2 size-4" viewBox="0 0 16 16"><path fill="#fff" stroke="#444" stroke-width=".6" d="M1 5q3-3 6 0 1 3-2 4v5H3V9Q0 8 1 5z" /><path fill="none" stroke="#e8e8e8" d="M10 2q3 3 1 6M13 1q3 4 1 8" /><circle cx="11" cy="11" r="4.500" fill="#c92a22" /><path stroke="#fff" stroke-width="1.500" d="M9 9l4 4M13 9l-4 4" /></svg>
      <svg class="ml-2 size-4" viewBox="0 0 16 16"><path fill="#fff" stroke="#333" stroke-width=".6" d="M1 1h2v14H1zM3 2h6v2h6l-2 3 1 2H8V8H3z" /></svg>
      <svg class="ml-2 size-4" viewBox="0 0 16 16"><path fill="#6c7b8f" stroke="#fff" stroke-width="1.500" d="M4 4h11v8H4z" /><path stroke="#fff" stroke-width="1.500" d="M6 15h8M3 6v8M1 1v2M5 1v2" /><path fill="#fff" d="M0 2h6v4H0z" /></svg>
      <svg class="ml-2 size-4" viewBox="0 0 16 16"><path fill="#fff" stroke="#333" stroke-width=".6" d="M1 5h3l4-4v14l-4-4H1z" /><path fill="none" stroke="#fff" d="M10 5q2 3 0 6M12 3q3 5 0 10" /></svg>
      <time class="ml-4 w-[66px] text-center leading-[17px]">10:16<br />02/07/2018</time>
      <button aria-label="Mostrar escritorio" class="ml-2 w-3.5 self-stretch border-l border-[#3f4a58] bg-linear-to-br from-[#5d6b7e] to-[#94a4ba]"></button>
    </div>
  </footer>

</body>
</html>
